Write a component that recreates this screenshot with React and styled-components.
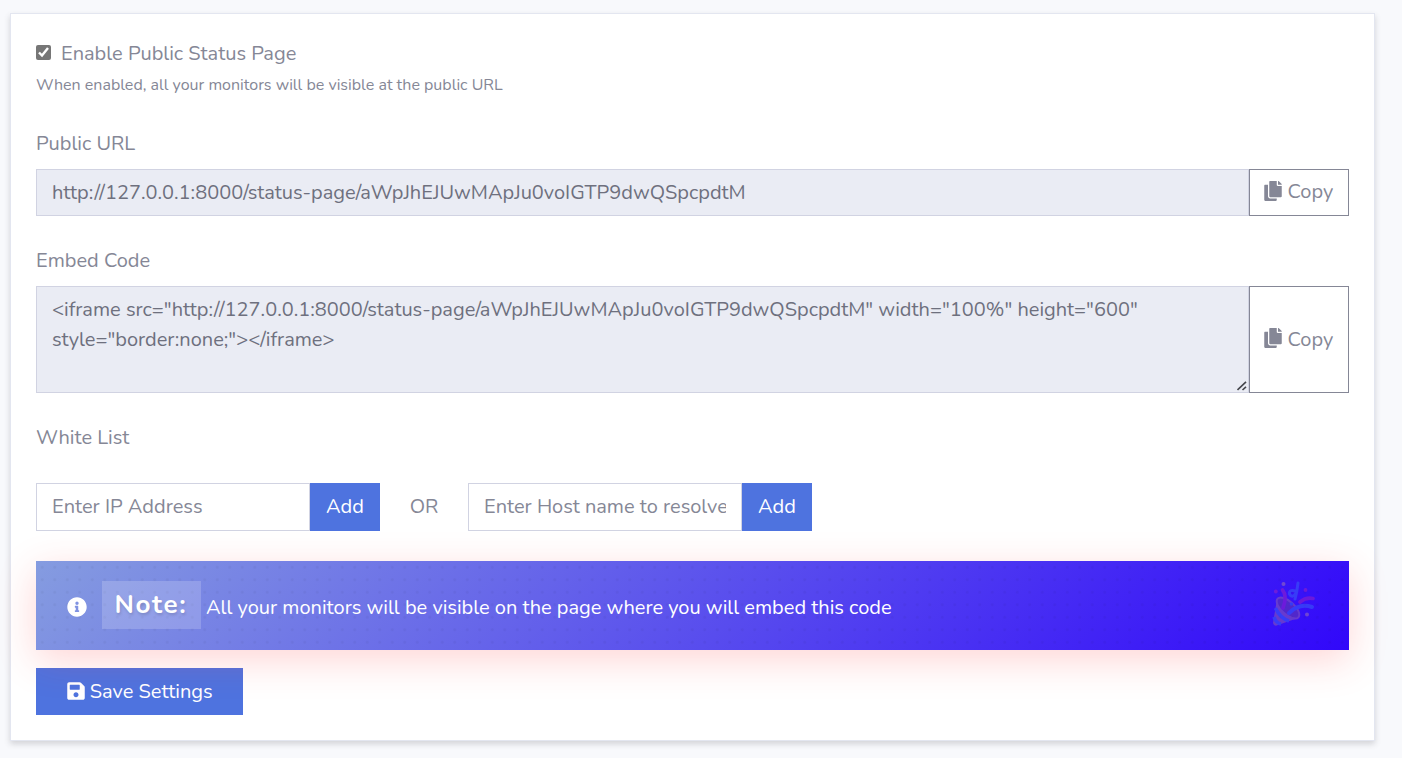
import React from "react";
import styled, { createGlobalStyle } from "styled-components";
import { FaCopy, FaInfoCircle, FaSave } from "react-icons/fa";

const GlobalStyle = createGlobalStyle`
  *, *::before, *::after { box-sizing: border-box; }
  body {
    margin: 0;
    background: #f8f9fc;
    color: #858796;
    font-family: Nunito, Lato, "Liberation Sans", sans-serif;
    font-size: 20px;
    line-height: 30px;
  }
  input, textarea, button { font: inherit; margin: 0; border-radius: 0; }
`;

const Page = styled.main`
  height: 758px;
  padding: 13px 27px 17px 10px;
  overflow: hidden;
`;

const Card = styled.form`
  display: flex;
  flex-direction: column;
  height: 728px;
  padding: 25px;
  background: #fff;
  border: 1px solid #e3e6f0;
  box-shadow: 0 3px 6px rgba(58, 59, 69, 0.2);
`;

const Toggle = styled.label`
  display: flex;
  align-items: center;
  gap: 10px;
  height: 30px;
`;

const Checkbox = styled.input`
  && {
    width: 15px;
    height: 15px;
    margin-bottom: 3px;
    accent-color: #767676;
  }
`;

const Text = styled.span`
  padding-top: ${(p) => p.$drop || 0}px;
  white-space: nowrap;
`;

const Hint = styled.small`
  height: 24px;
  margin-top: 4px;
  font-size: 16px;
  line-height: 24px;
`;

const Label = styled.label`
  height: 30px;
  margin: ${(p) => p.$top}px 0 ${(p) => p.$bottom}px;
`;

const Group = styled.div`
  position: relative;
  display: flex;
  width: ${(p) => (p.$width ? `${p.$width}px` : "auto")};
  height: ${(p) => p.$height}px;
`;

const Field = styled.input`
  flex: 1;
  min-width: 0;
  padding: ${(p) => (p.readOnly ? "8px 15px 7px" : "7px 15px 8px")};
  border: 1px solid #d1d3e2;
  background: ${(p) => (p.readOnly ? "#eaecf4" : "#fff")};
  color: #6e707e;
  outline: none;
  &::placeholder { color: #858796; opacity: 1; }
`;

const CodeField = styled(Field)`
  display: block;
  resize: none;
  overflow: auto;
`;

const Grip = styled.svg`
  position: absolute;
  right: 102px;
  bottom: 2px;
  pointer-events: none;
`;

const CopyButton = styled.button`
  display: flex;
  align-items: center;
  gap: 4.5px;
  width: 100px;
  padding: 0 0 3px 13px;
  border: 1px solid #858796;
  background: #fff;
  color: #858796;
`;

const Button = styled.button`
  display: flex;
  align-items: center;
  justify-content: center;
  gap: 3.5px;
  width: ${(p) => p.$width}px;
  height: ${(p) => p.$height}px;
  padding: 0 0 1px;
  border: 0;
  background: #4e73df;
  color: #fff;
`;

const WhiteList = styled.div`
  display: flex;
  align-items: center;
`;

const Or = styled.span`
  width: 88px;
  text-align: center;
`;

const Note = styled.div`
  position: relative;
  display: flex;
  align-items: center;
  height: 89px;
  margin: 30px 0 18px;
  padding: 0 34px 0 31px;
  color: #fff;
  background:
    radial-gradient(circle, rgba(0, 0, 0, 0.04) 1px, transparent 2px) 0 0 / 12.5px 12.5px,
    linear-gradient(135deg, #859ce0 0%, #3107fa 100%);
  box-shadow: 0 10px 38px rgba(255, 65, 65, 0.22);
`;

const InfoIcon = styled(FaInfoCircle)`
  margin-top: 2px;
`;

const NoteTag = styled.strong`
  width: 99px;
  height: 48px;
  margin: 0 5.5px 1px 14.5px;
  padding-left: 13px;
  background: rgba(255, 255, 255, 0.18);
  font-size: 26px;
  font-weight: 700;
  line-height: 48px;
  letter-spacing: 1.6px;
  text-shadow: 1px 2px 3px rgba(0, 0, 0, 0.15);
`;

const Popper = styled.svg`
  margin: 0 0 2px auto;
  opacity: 0.3;
`;

const PartyPopper = () => (
  <Popper width="43" height="47" viewBox="0 0 43 47" fill="none" strokeLinecap="round">
    <path d="M5 18 L1 42 Q2 46 6 44 L26 37 Q20 35 14 29 Q8 23 5 18Z" fill="#d69a72" />
    <path d="M3.4 27 Q8 37 17 40 M2 36 Q4 42 9 43" stroke="#3a9cf5" strokeWidth="3.6" strokeLinecap="butt" />
    <ellipse cx="16" cy="27" rx="14" ry="6.5" transform="rotate(42 16 27)" fill="#8f5c65" stroke="#d69a72" strokeWidth="2" />
    <path d="M10.5 9 Q15.5 15 11 27" stroke="#e82d9b" strokeWidth="3.6" />
    <path d="M28 21 Q34 16 41 17.5" stroke="#e82d9b" strokeWidth="3.6" />
    <path d="M17 32 Q27 22 40 26" stroke="#3a9cf5" strokeWidth="4" />
    <path d="M26 2 Q25 11 23 18 M23.5 10 Q17 8 17.5 13 Q20 18 24 12" stroke="#3a9cf5" strokeWidth="3" />
    <circle cx="19.5" cy="23" r="1.8" fill="#3a9cf5" />
    <circle cx="11.5" cy="3" r="2" fill="#f4c27b" />
    <circle cx="35" cy="33.5" r="2" fill="#f4c27b" />
    <circle cx="3.8" cy="10.5" r="1.9" fill="#e82d9b" />
    <circle cx="33.5" cy="9" r="1.9" fill="#e82d9b" />
  </Popper>
);

const BASE = "http://127.0.0.1:8000/status-page/aWpJhEJUwMApJu0voIGTP9dwQSpcpdtM";
const EMBED = `<iframe src="${BASE}" width="100%" height="600" style="border:none;"></iframe>`;

export default function App() {
  return (
    <Page>
      <GlobalStyle />
      <Card onSubmit={(e) => e.preventDefault()}>
        <Toggle>
          <Checkbox type="checkbox" defaultChecked />
          <Text>Enable Public Status Page</Text>
        </Toggle>
        <Hint>When enabled, all your monitors will be visible at the public URL</Hint>

        <Label $top={32} $bottom={10}>Public URL</Label>
        <Group $height={47}>
          <Field readOnly value={BASE} />
          <CopyButton type="button">
            <FaCopy size={20} />
            <Text $drop={2}>Copy</Text>
          </CopyButton>
        </Group>

        <Label $top={30} $bottom={10}>Embed Code</Label>
        <Group $height={107}>
          <CodeField as="textarea" readOnly value={EMBED} />
          <Grip width="10" height="10" viewBox="0 0 10 10" stroke="#45464c" strokeWidth="1.6">
            <path d="M0.5 9 L9 0.8 M5.5 9 L9 5.8" />
          </Grip>
          <CopyButton type="button">
            <FaCopy size={20} />
            <Text $drop={4}>Copy</Text>
          </CopyButton>
        </Group>

        <Label $top={30} $bottom={30}>White List</Label>
        <WhiteList>
          <Group $width={344} $height={48}>
            <Field placeholder="Enter IP Address" />
            <Button type="button" $width={70} $height={48}><Text>Add</Text></Button>
          </Group>
          <Or>OR</Or>
          <Group $width={344} $height={48}>
            <Field placeholder="Enter Host name to resolve" />
            <Button type="button" $width={70} $height={48}><Text>Add</Text></Button>
          </Group>
        </WhiteList>

        <Note>
          <InfoIcon size={20} />
          <NoteTag>Note:</NoteTag>
          <Text $drop={4}>All your monitors will be visible on the page where you will embed this code</Text>
          <PartyPopper />
        </Note>

        <Button type="submit" $width={207} $height={47}>
          <FaSave size={20} />
          <Text $drop={2}>Save Settings</Text>
        </Button>
      </Card>
    </Page>
  );
}
